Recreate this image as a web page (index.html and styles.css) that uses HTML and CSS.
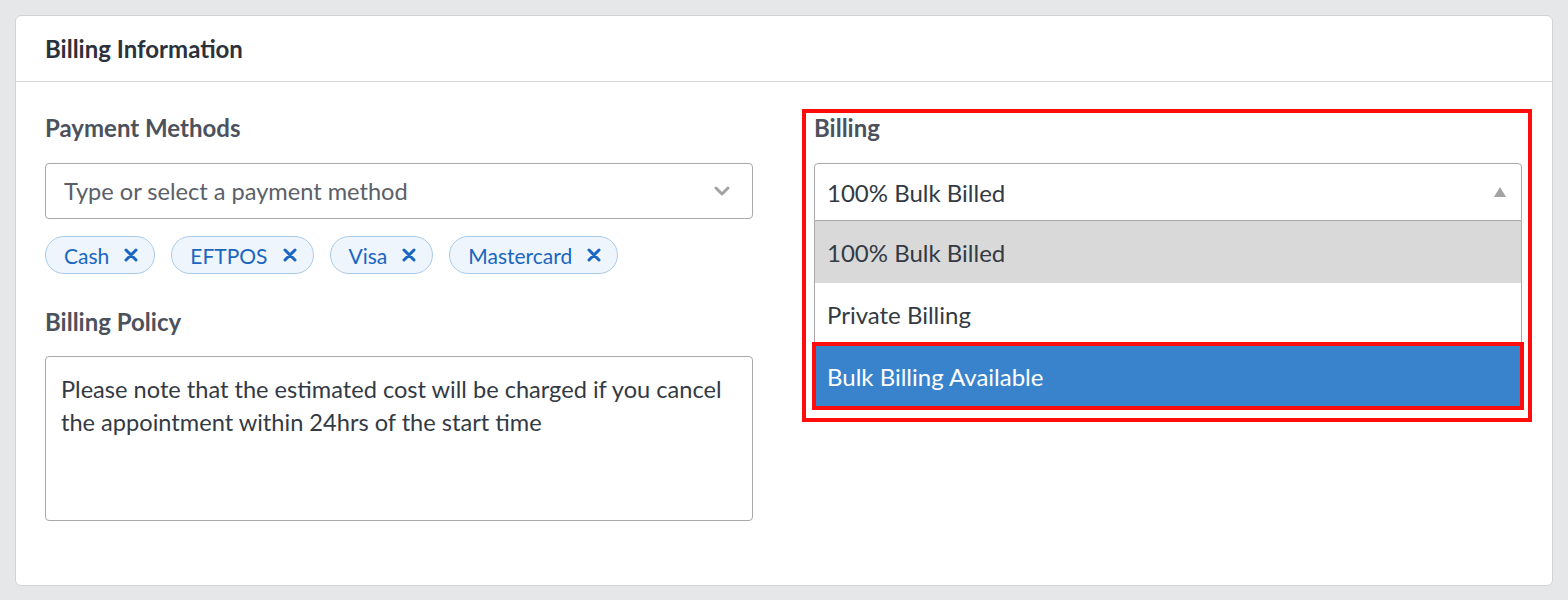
FILE: index.html
```html
<!DOCTYPE html>
<html lang="en">
<head>
    <meta charset="UTF-8">
    <meta name="viewport" content="width=device-width, initial-scale=1.0">
    <title>Billing Information</title>
    <link rel="stylesheet" href="styles.css">
</head>
<body>
    <div class="card">
        <div class="card-header">
            <h2>Billing Information</h2>
        </div>

        <div class="card-body">
            <div class="col">
                <div class="field-label">Payment Methods</div>
                <div class="select-box">
                    <span class="placeholder">Type or select a payment method</span>
                    <svg class="chevron" width="16" height="10" viewBox="0 0 16 10">
                        <path d="M2 2 L8 8 L14 2" fill="none" stroke="#a3a3a3" stroke-width="3" stroke-linecap="round" stroke-linejoin="round"/>
                    </svg>
                </div>

                <div class="tags">
                    <span class="tag">Cash <svg class="tag-x" width="14" height="14" viewBox="0 0 14 14"><path d="M2 2 L12 12 M12 2 L2 12"/></svg></span>
                    <span class="tag">EFTPOS <svg class="tag-x" width="14" height="14" viewBox="0 0 14 14"><path d="M2 2 L12 12 M12 2 L2 12"/></svg></span>
                    <span class="tag">Visa <svg class="tag-x" width="14" height="14" viewBox="0 0 14 14"><path d="M2 2 L12 12 M12 2 L2 12"/></svg></span>
                    <span class="tag">Mastercard <svg class="tag-x" width="14" height="14" viewBox="0 0 14 14"><path d="M2 2 L12 12 M12 2 L2 12"/></svg></span>
                </div>

                <div class="field-label policy-label">Billing Policy</div>
                <div class="textarea">Please note that the estimated cost will be charged if you cancel the appointment within 24hrs of the start time</div>
            </div>

            <div class="col billing-col">
                <div class="field-label">Billing</div>
                <div class="select-box open">
                    <span class="value">100% Bulk Billed</span>
                    <svg class="triangle" width="12" height="10" viewBox="0 0 12 10">
                        <path d="M6 0 L12 10 L0 10 Z" fill="#a3a3a3"/>
                    </svg>
                </div>
                <ul class="dropdown">
                    <li class="option hovered">100% Bulk Billed</li>
                    <li class="option">Private Billing</li>
                    <li class="option selected">Bulk Billing Available</li>
                </ul>
                <div class="highlight-frame"></div>
            </div>
        </div>
    </div>
</body>
</html>
```

FILE: styles.css
```css
body {
    margin: 0;
    padding: 15px;
    background: #e6e7e9;
    font-family: Lato, "Liberation Sans", sans-serif;
    color: #333a44;
}
.card {
    background: #fff;
    border: 1px solid #d2d3d5;
    border-radius: 6px;
}
.card-header {
    padding: 17px 29px 16px;
    border-bottom: 1px solid #d6d7d9;
}
.card-header h2 {
    margin: 0;
    font-size: 24px;
    line-height: 32px;
    font-weight: 700;
    color: #2c323c;
}
.card-body {
    display: grid;
    grid-template-columns: 1fr 1fr;
    column-gap: 61px;
    padding: 31px 30px 64px 29px;
}
.col {
    display: flex;
    flex-direction: column;
}
.billing-col {
    position: relative;
}
.field-label {
    font-size: 24px;
    line-height: 30px;
    font-weight: 700;
    color: #4b525d;
    margin-bottom: 20px;
}
.policy-label {
    margin-top: 33px;
    margin-bottom: 19px;
}
.select-box {
    height: 56px;
    box-sizing: border-box;
    border: 1px solid #a9a9a9;
    border-radius: 4px;
    display: flex;
    align-items: center;
    justify-content: space-between;
    padding: 0 22px 0 18px;
    font-size: 24px;
}
.placeholder {
    color: #5b6068;
    font-size: 23.6px;
}
.select-box.open {
    height: 58px;
    padding: 0 15px 0 12px;
    border-bottom-left-radius: 0;
    border-bottom-right-radius: 0;
}
.value {
    color: #333a44;
}
.tags {
    display: flex;
    gap: 16px;
    margin-top: 17px;
}
.tag {
    display: inline-flex;
    align-items: center;
    gap: 15px;
    height: 38px;
    box-sizing: border-box;
    padding: 0 16px 0 18px;
    border: 1px solid #a9cbec;
    border-radius: 19px;
    background: #eef5fc;
    color: #1a66c1;
    font-size: 21px;
}
.tag-x path {
    fill: none;
    stroke: #1a66c1;
    stroke-width: 3;
    stroke-linecap: round;
}
.textarea {
    height: 165px;
    box-sizing: border-box;
    border: 1px solid #a9a9a9;
    border-radius: 4px;
    padding: 16px 15px;
    font-size: 23.6px;
    line-height: 33px;
    color: #333a44;
}
.dropdown {
    list-style: none;
    margin: 0;
    padding: 0;
    border: 1px solid #a9a9a9;
    border-top: none;
    border-bottom: none;
}
.option {
    height: 62px;
    display: flex;
    align-items: center;
    padding: 0 12px;
    font-size: 24px;
    color: #333a44;
}
.option.hovered {
    background: #d9d9d9;
}
.option.selected {
    background: #3983cd;
    color: #fff;
    outline: 4px solid #ff0d0d;
    outline-offset: -1px;
}
.highlight-frame {
    position: absolute;
    left: -12px;
    right: -10px;
    top: -4px;
    height: 313px;
    box-sizing: border-box;
    border: 4px solid #ff0d0d;
    pointer-events: none;
}
```
